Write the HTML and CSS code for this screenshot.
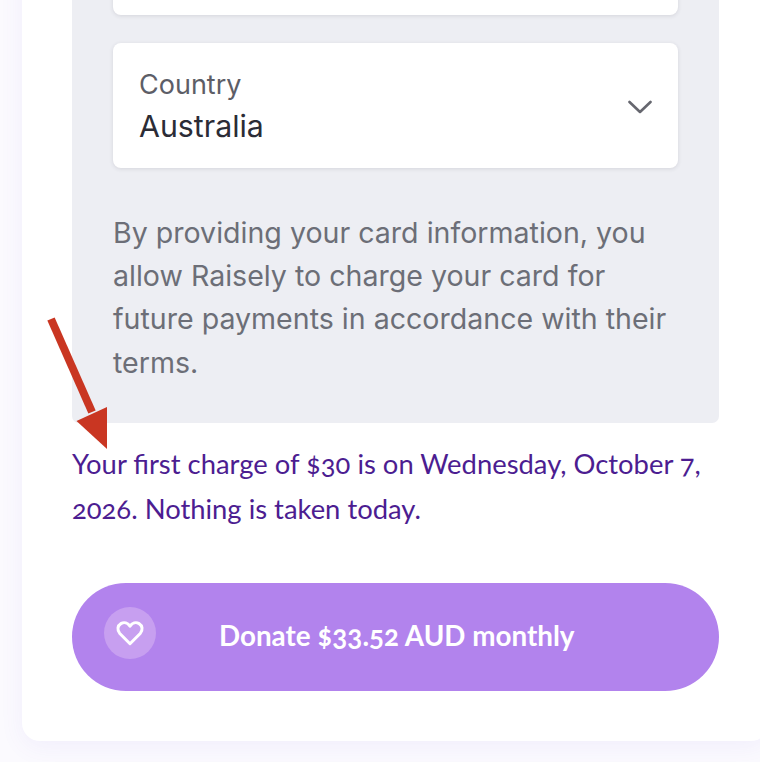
FILE: index.html
```html
<!DOCTYPE html>
<html lang="en">
<head>
<meta charset="utf-8">
<title>Donate</title>
<link rel="stylesheet" href="styles.css">
</head>
<body>
<main class="card">
  <section class="panel">
    <div class="field field-prev"></div>
    <div class="field field-select">
      <div class="field-text">
        <span class="field-label">Country</span>
        <span class="field-value">Australia</span>
      </div>
      <svg class="chevron" viewBox="0 0 24 14" width="24" height="14" aria-hidden="true"><path d="M1.5 2 12 12 22.5 2" fill="none" stroke="#66676f" stroke-width="2.6" stroke-linecap="round" stroke-linejoin="round"/></svg>
    </div>
    <p class="terms">By providing your card information, you allow Raisely to charge your card for future payments in accordance with their terms.</p>
  </section>
  <p class="notice">Your first charge of $30 is on Wednesday, October 7, 2026. Nothing is taken today.</p>
  <button class="donate" type="button">
    <span class="donate-icon">
      <svg viewBox="0 0 30 28" width="28" height="26" aria-hidden="true"><path d="M15 25.500 4 14.500C.8 11 1.600 6 5.200 3.900 8.600 2 12.800 3 15 6.800 17.200 3 21.400 2 24.800 3.900 28.400 6 29.200 11 26 14.500Z" fill="none" stroke="#fff" stroke-width="3.200" stroke-linejoin="round"/></svg>
    </span>
    <span class="donate-label">Donate $33.52 AUD monthly</span>
  </button>
</main>
<svg class="arrow" viewBox="0 0 760 762" width="760" height="762" aria-hidden="true">
  <path d="M51 319 92 412" stroke="#c93622" stroke-width="8" fill="none"/>
  <path d="M76.500 421 107 407V449Z" fill="#c93622"/>
</svg>
</body>
</html>
```
FILE: styles.css
```css
* { box-sizing: border-box; }
html, body { margin: 0; padding: 0; }
body {
  width: 760px;
  height: 762px;
  overflow: hidden;
  position: relative;
  display: flex;
  flex-direction: column;
  justify-content: flex-end;
  background: #fbfafe;
  font-family: Inter, "Liberation Sans", sans-serif;
}
.card {
  flex: none;
  width: 747px;
  margin: 0 0 21px 22px;
  padding: 0 50px 50px;
  background: #fff;
  border-radius: 18px;
  box-shadow: 0 6px 24px rgba(120, 90, 220, 0.07);
}
.panel {
  padding: 0 41px 39px 41px;
  background: #edeef3;
  border-radius: 0 0 7px 7px;
}
.field {
  background: #fff;
  border-radius: 8px;
  box-shadow: 0 1px 4px rgba(40, 40, 60, 0.12);
}
.field-prev { height: 100px; margin-bottom: 28px; }
.field-select {
  height: 125px;
  padding: 0 26px 0 26px;
  display: flex;
  align-items: center;
  justify-content: space-between;
}
.field-text { display: flex; flex-direction: column; margin-top: 2px; }
.field-label { font-size: 27px; line-height: 38px; color: #5d5e67; }
.field-value { font-size: 30.300px; line-height: 44px; color: #2b2c36; }
.chevron { margin-top: 3px; }
.terms {
  margin: 42.500px 0 0;
  font-size: 28.570px;
  line-height: 43.330px;
  color: #6c6e77;
}
.notice {
  margin: 18px 0 0;
  font-family: Lato, "Open Sans", sans-serif;
  font-size: 27.400px;
  line-height: 45px;
  color: #4c1d91;
  font-feature-settings: "onum" 1, "liga" 1;
}
.donate {
  display: flex;
  align-items: center;
  width: 100%;
  height: 108px;
  margin: 52px 0 0;
  padding: 0 32px;
  border: 0;
  border-radius: 54px;
  background: #b283ed;
  color: #fff;
  font-family: Lato, "Open Sans", sans-serif;
}
.donate-icon {
  flex: none;
  display: flex;
  align-items: center;
  justify-content: center;
  width: 52px;
  height: 52px;
  margin-bottom: 8px;
  border-radius: 50%;
  background: #c79ff0;
}
.donate-label {
  margin: 0 0 2px 63px;
  font-size: 27.800px;
  font-weight: 700;
  line-height: 1;
  font-feature-settings: "onum" 1;
}
.arrow { position: absolute; left: 0; top: 0; pointer-events: none; }
```
